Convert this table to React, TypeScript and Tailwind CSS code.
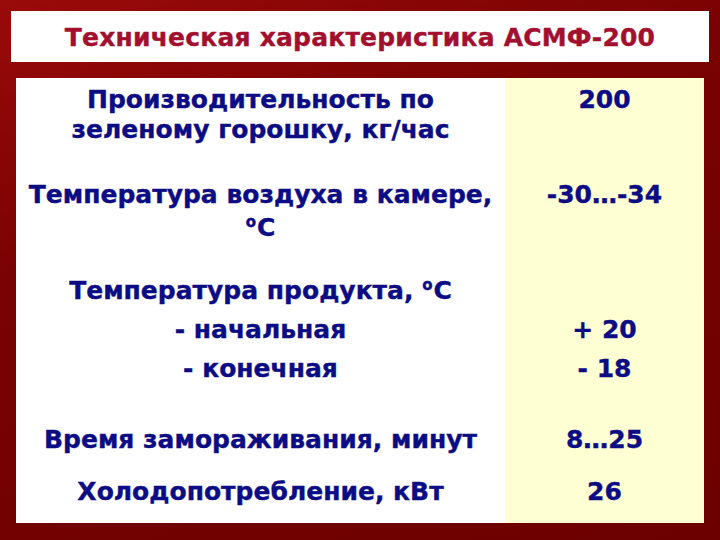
import React from "react";

const font = { fontFamily: '"DejaVu Sans", Verdana, sans-serif' };

function Deg() {
  return <span className="inline-block text-[15px] leading-[15px] align-baseline relative top-[-9px] mr-[1px]">o</span>;
}

export default function App() {
  return (
    <div
      className="w-[720px] h-[540px] bg-[linear-gradient(160deg,#9a0a0a_0%,#7a0202_35%,#6c0000_100%)] pt-[11px] pl-[11px] font-bold"
      style={font}
    >
      <div className="w-[698px] h-[51px] bg-white flex items-center justify-center">
        <div className="text-[#a3102f] text-[25px] leading-[30px] tracking-[0.2px] pt-[2px] [-webkit-text-stroke:0.4px_#a3102f]">
          Техническая характеристика АСМФ-200
        </div>
      </div>
      <div className="ml-[5px] mt-[16px] w-[688px] h-[445px] grid grid-cols-[489px_199px] grid-rows-[92px_95px_140px_65px_53px] text-[#0c0c84] text-[25px] text-center [-webkit-text-stroke:0.4px_#0c0c84]">
        <div className="bg-white pt-[7px] leading-[30px]">
          <div>Производительность по</div>
          <div>зеленому горошку, кг/час</div>
        </div>
        <div className="bg-[#ffffd4] pt-[7px] leading-[30px]">200</div>

        <div className="bg-white pt-[8px] leading-[33px]">
          <div>Температура воздуха в камере,</div>
          <div>
            <Deg />C
          </div>
        </div>
        <div className="bg-[#ffffd4] pt-[8px] leading-[33px]">-30…-34</div>

        <div className="bg-white pt-[6px] leading-[39px]">
          <div>
            Температура продукта, <Deg />C
          </div>
          <div>- начальная</div>
          <div>- конечная</div>
        </div>
        <div className="bg-[#ffffd4] pt-[45px] leading-[39px]">
          <div>+ 20</div>
          <div>- 18</div>
        </div>

        <div className="bg-white pt-[20px] leading-[30px]">Время замораживания, минут</div>
        <div className="bg-[#ffffd4] pt-[20px] leading-[30px]">8…25</div>

        <div className="bg-white pt-[7px] leading-[30px]">Холодопотребление, кВт</div>
        <div className="bg-[#ffffd4] pt-[7px] leading-[30px]">26</div>
      </div>
    </div>
  );
}
